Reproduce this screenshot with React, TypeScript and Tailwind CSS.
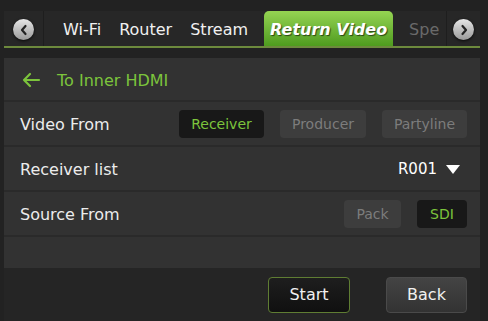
import React from "react";

const font = { fontFamily: '"DejaVu Sans", Verdana, sans-serif' };

function Circle({ dir }: { dir: "left" | "right" }) {
  return (
    <div className="w-[21px] h-[21px] rounded-full bg-gradient-to-b from-[#e6e6e6] to-[#9a9a9a] shadow-[0_1px_3px_rgba(0,0,0,0.8)] flex items-center justify-center">
      <svg width="10" height="12" viewBox="0 0 10 12">
        {dir === "left" ? (
          <path d="M6.5 2 L3 6 L6.5 10" stroke="#222" strokeWidth="2.2" fill="none" strokeLinecap="round" strokeLinejoin="round" />
        ) : (
          <path d="M3.5 2 L7 6 L3.5 10" stroke="#222" strokeWidth="2.2" fill="none" strokeLinecap="round" strokeLinejoin="round" />
        )}
      </svg>
    </div>
  );
}

function Opt({ label, active, w }: { label: string; active?: boolean; w: string }) {
  return (
    <div
      className={`${w} h-[28px] pt-[1px] rounded-[4px] flex items-center justify-center text-[14px] ${
        active ? "bg-[#181818] text-[#7cc43c]" : "bg-[#3d3d3d] text-[#7c7c7c]"
      }`}
    >
      {label}
    </div>
  );
}

function Row({ label, children }: { label: string; children?: React.ReactNode }) {
  return (
    <div className="h-[45px] flex items-center justify-between pl-[16px] pr-[13px] border-b-2 border-[#2a2a2a]">
      <span className="pt-[3px] text-[16px] text-[#ececec]">{label}</span>
      <div className="flex items-center gap-[16px]">{children}</div>
    </div>
  );
}

export default function App() {
  return (
    <div className="w-[488px] h-[321px] bg-[#222222] flex flex-col overflow-hidden" style={font}>
      <div className="pt-[11px] pl-[4px] pr-[8px]">
        <div className="h-[35px] bg-[#272727] flex items-stretch">
          <div className="w-[40px] pt-[2px] flex items-center justify-center border-r border-[#1e1e1e]">
            <Circle dir="left" />
          </div>
          <div className="flex-1 flex items-stretch overflow-hidden pl-[10px] text-[16px]">
            <div className="px-[9px] pt-[3px] flex items-center text-[#f0f0f0]">Wi-Fi</div>
            <div className="px-[9px] pt-[3px] flex items-center text-[#f0f0f0]">Router</div>
            <div className="px-[9px] pt-[3px] flex items-center text-[#f0f0f0]">Stream</div>
            <div className="ml-[7px] pt-[3px] w-[129px] shrink-0 rounded-t-[5px] bg-gradient-to-b from-[#95d452] to-[#4e9c1e] flex items-center justify-center font-bold italic text-white [text-shadow:1px_1px_1px_rgba(0,0,0,0.6)]">
              Return Video
            </div>
            <div className="ml-[16px] pt-[3px] flex items-center text-[#6a6a6a] whitespace-nowrap">Spe</div>
          </div>
          <div className="w-[34px] pt-[2px] flex items-center justify-center border-l border-[#1e1e1e]">
            <Circle dir="right" />
          </div>
        </div>
        <div className="h-[2px] bg-[#6d8a3d]" />
      </div>

      <div className="mt-[10px] ml-[4px] mr-[8px] h-[210px] bg-[#323232] flex flex-col">
        <div className="h-[44px] flex items-center pl-[17px] gap-[16px] border-b-2 border-[#2a2a2a] text-[#7cc43c]">
          <svg width="20" height="16" viewBox="0 0 20 16" className="mt-[2px]">
            <path d="M18 8 H3 M9 2 L3 8 L9 14" stroke="#7cc43c" strokeWidth="2.2" fill="none" strokeLinecap="round" strokeLinejoin="round" />
          </svg>
          <span className="pt-[3px] text-[16px]">To Inner HDMI</span>
        </div>
        <Row label="Video From">
          <Opt label="Receiver" active w="w-[85px]" />
          <Opt label="Producer" w="w-[86px]" />
          <Opt label="Partyline" w="w-[85px]" />
        </Row>
        <Row label="Receiver list">
          <div className="flex items-center gap-[9px] pr-[7px] pt-[2px] text-[15px] text-white">
            R001
            <svg width="14" height="9" viewBox="0 0 14 9">
              <path d="M0 0 H14 L7 9 Z" fill="#ffffff" />
            </svg>
          </div>
        </Row>
        <Row label="Source From">
          <Opt label="Pack" w="w-[57px]" />
          <Opt label="SDI" active w="w-[50px]" />
        </Row>
      </div>

      <div className="flex-1 bg-[#252525] ml-[4px] mr-[8px] flex items-center justify-end gap-[36px] pr-[13px]">
        <button className="w-[82px] h-[36px] rounded-[4px] border border-[#5f7d33] bg-gradient-to-b from-[#1e1e1e] to-[#101010] text-[16px] text-[#f0f0f0]">
          Start
        </button>
        <button className="w-[81px] h-[36px] rounded-[4px] border border-[#4a4a4a] bg-gradient-to-b from-[#444444] to-[#333333] text-[16px] text-[#f0f0f0]">
          Back
        </button>
      </div>
    </div>
  );
}
